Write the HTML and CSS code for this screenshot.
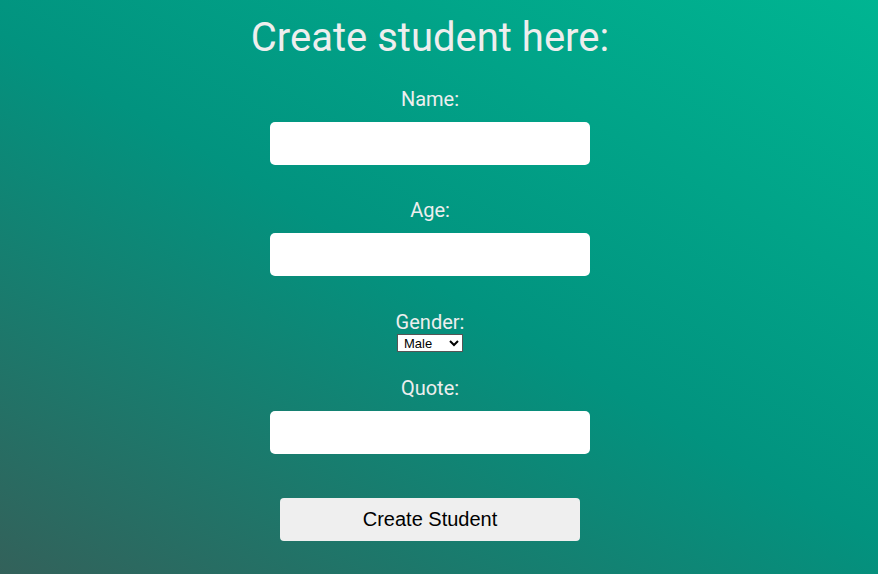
FILE: index.html
```html
<!DOCTYPE html>
<html lang="en">
<head>
<meta charset="utf-8">
<title>Create student</title>
<link rel="stylesheet" href="styles.css">
</head>
<body>
<main class="page">
  <h1 class="title">Create student here:</h1>
  <form class="form">
    <div class="field field-name">
      <label class="label" for="name">Name:</label>
      <input class="text-input" id="name" type="text">
    </div>
    <div class="field">
      <label class="label" for="age">Age:</label>
      <input class="text-input" id="age" type="text">
    </div>
    <div class="field field-gender">
      <label class="label label-tight" for="gender">Gender:</label>
      <select class="select" id="gender">
        <option>Male</option>
        <option>Female</option>
      </select>
    </div>
    <div class="field">
      <label class="label" for="quote">Quote:</label>
      <input class="text-input" id="quote" type="text">
    </div>
    <button class="submit" type="button">Create Student</button>
  </form>
</main>
</body>
</html>
```

FILE: styles.css
```css
html, body {
  margin: 0;
  height: 100%;
}

body {
  background: linear-gradient(30deg, #33615a 0%, #02937f 50%, #00b592 100%);
  font-family: Roboto, "Open Sans", Arial, sans-serif;
  color: #eeeeee;
}

.page {
  width: 860px;
  display: flex;
  flex-direction: column;
  align-items: center;
}

.title {
  margin: 14px 0 0;
  font-size: 40px;
  font-weight: 400;
  line-height: 47px;
}

.form {
  display: flex;
  flex-direction: column;
  align-items: center;
  margin-top: 27px;
}

.field {
  display: flex;
  flex-direction: column;
  align-items: center;
  margin-bottom: 35px;
}

.field-name {
  margin-bottom: 34px;
}

.field-gender {
  margin-bottom: 25px;
}

.label {
  font-size: 20px;
  line-height: 23px;
  margin-bottom: 11px;
}

.label-tight {
  margin-bottom: 0;
}

.text-input {
  width: 320px;
  height: 43px;
  box-sizing: border-box;
  border: none;
  border-radius: 5px;
  background: #ffffff;
  padding: 0 10px;
  font-size: 16px;
}

.select {
  width: 66px;
  height: 18px;
  font-family: Arial, "Liberation Sans", sans-serif;
  font-size: 13px;
  background: #ffffff;
  color: #000000;
  border: 1px solid #555555;
  padding: 0 2px;
  border-radius: 0;
}

.submit {
  margin-top: 9px;
  width: 300px;
  height: 43px;
  border: none;
  border-radius: 4px;
  background: #efefef;
  color: #000000;
  font-family: Arial, "Liberation Sans", sans-serif;
  font-size: 20px;
}
```
